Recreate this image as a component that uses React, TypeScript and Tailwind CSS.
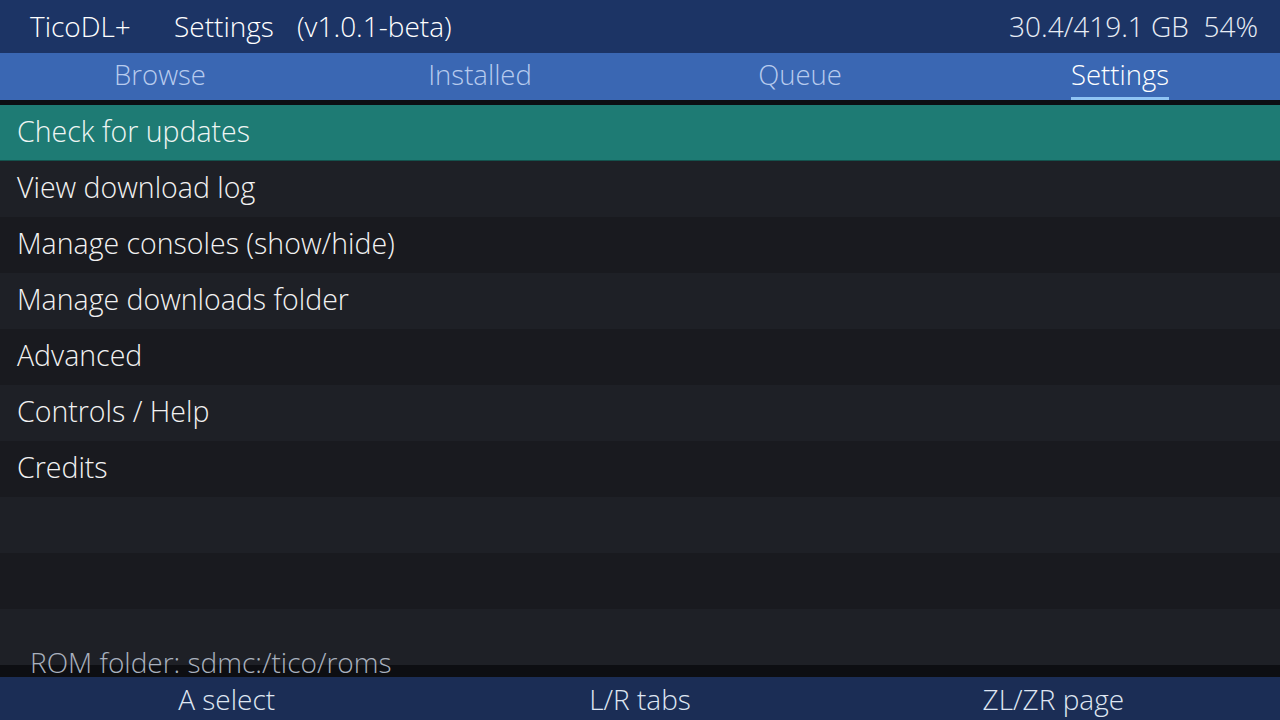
import React from 'react';

const TABS = ['Browse', 'Installed', 'Queue', 'Settings'];
const ITEMS = [
  'Check for updates',
  'View download log',
  'Manage consoles (show/hide)',
  'Manage downloads folder',
  'Advanced',
  'Controls / Help',
  'Credits',
  '',
  '',
  '',
];

export default function App() {
  const active = 3;
  const selected = 0;

  return (
    <div
      className="w-[1280px] h-[720px] overflow-hidden flex flex-col bg-[#16171b] text-white font-[350]"
      style={{ fontFamily: '"Open Sans", "Noto Sans", sans-serif' }}
    >
      {/* header */}
      <div className="h-[53px] shrink-0 bg-[#1c3465] flex items-center justify-between pl-[30px] pr-[22px] pb-[2px] text-[28px] leading-none">
        <div className="flex items-center">
          <span className="w-[144px]">TicoDL+</span>
          <span className="w-[123px]">Settings</span>
          <span>(v1.0.1-beta)</span>
        </div>
        <span className="text-[#e8edf5]">30.4/419.1 GB&nbsp;&nbsp;54%</span>
      </div>

      {/* tabs */}
      <div className="h-[47px] shrink-0 bg-[#3a67b3] grid grid-cols-4">
        {TABS.map((t, i) => (
          <div key={t} className="flex justify-center">
            <div
              className={`relative flex items-center text-[27.5px] leading-none pb-[3px] ${
                i === active ? 'text-white' : 'text-[#b7cbee]'
              }`}
            >
              {t}
              {i === active && (
                <div className="absolute left-0 right-0 bottom-0 h-[3px] bg-[#8fc4f4]" />
              )}
            </div>
          </div>
        ))}
      </div>
      <div className="h-[5px] shrink-0 bg-[#0c0e13]" />

      {/* list */}
      <div className="relative flex-1 flex flex-col">
        {ITEMS.map((item, i) => (
          <div
            key={i}
            className={`h-[56px] shrink-0 flex items-center pl-[17px] pb-[3px] text-[28.5px] leading-none ${
              i === selected
                ? 'bg-[#1e7b74] text-[#eef5f3] border-b border-[#14524d]'
                : i % 2 === 1
                ? 'bg-[#1e2026] text-[#f2f2f2]'
                : 'bg-[#191a1f] text-[#f2f2f2]'
            }`}
          >
            {item}
          </div>
        ))}
        <div className="flex-1 bg-[#0d0e12]" />
        <div className="absolute left-[30px] bottom-[1px] text-[28px] leading-none text-[#a9b1be]">
          ROM folder: sdmc:/tico/roms
        </div>
      </div>

      {/* footer */}
      <div className="h-[43px] shrink-0 bg-[#1b2d55] grid grid-cols-3 px-5 text-[28px] leading-none text-[#dfe6f2]">
        <div className="flex items-center justify-center">A select</div>
        <div className="flex items-center justify-center">L/R tabs</div>
        <div className="flex items-center justify-center">ZL/ZR page</div>
      </div>
    </div>
  );
}
